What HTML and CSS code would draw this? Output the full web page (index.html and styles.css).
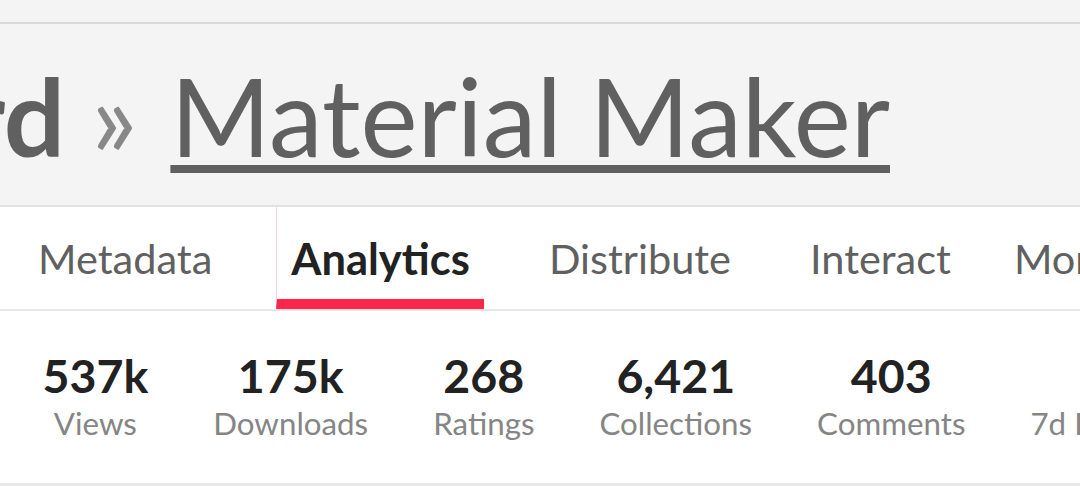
FILE: index.html
```html
<!DOCTYPE html>
<html lang="en">
<head>
<meta charset="utf-8">
<title>Material Maker - Analytics</title>
<link rel="stylesheet" href="styles.css">
</head>
<body>
<div class="top-strip"></div>
<header class="page-header">
  <h1 class="crumbs"><span class="crumb-parent">Dashboard</span><span class="crumb-sep">»</span><a class="crumb-current" href="#">Material Maker</a></h1>
</header>
<nav class="tabs">
  <a class="tab" href="#">Metadata</a>
  <a class="tab active" href="#">Analytics</a>
  <a class="tab" href="#">Distribute</a>
  <a class="tab" href="#">Interact</a>
  <a class="tab tab-more" href="#">More</a>
</nav>
<section class="stats">
  <div class="stat"><div class="stat-value">537k</div><div class="stat-label">Views</div></div>
  <div class="stat"><div class="stat-value">175k</div><div class="stat-label">Downloads</div></div>
  <div class="stat"><div class="stat-value">268</div><div class="stat-label">Ratings</div></div>
  <div class="stat"><div class="stat-value">6,421</div><div class="stat-label">Collections</div></div>
  <div class="stat"><div class="stat-value">403</div><div class="stat-label">Comments</div></div>
  <div class="stat"><div class="stat-value">1</div><div class="stat-label">7d Impressions</div></div>
</section>
</body>
</html>
```
FILE: styles.css
```css
* { box-sizing: border-box; }
html, body {
  margin: 0;
  padding: 0;
  background: #ffffff;
  font-family: Lato, "Noto Sans", sans-serif;
  overflow: hidden;
  width: 1080px;
  height: 489px;
}
.top-strip {
  height: 22px;
  background: #f4f4f4;
  border-bottom: 2px solid #dadada;
  box-sizing: content-box;
}
.page-header {
  background: #f4f4f4;
  height: 183px;
  border-bottom: 2px solid #e2e2e2;
  padding-top: 37px;
  overflow: hidden;
}
.crumbs {
  margin: 0;
  font-size: 108px;
  line-height: 1;
  font-weight: 400;
  color: #606060;
  white-space: nowrap;
  display: flex;
  align-items: baseline;
}
.crumb-parent {
  display: inline-block;
  width: 65px;
  overflow: hidden;
  direction: rtl;
  font-weight: 700;
  color: #606060;
}
.crumb-sep {
  color: #888888;
  margin: 0 33px 0 26px;
}
.crumb-current {
  color: #606060;
  text-decoration: underline;
  text-decoration-thickness: 8px;
  text-underline-offset: 8px;
}
.tabs {
  display: flex;
  height: 104px;
  border-bottom: 2px solid #e6e6e6;
  padding-left: 23px;
  white-space: nowrap;
  overflow: hidden;
}
.tab {
  flex: none;
  display: block;
  font-size: 41.5px;
  line-height: 46px;
  color: #606060;
  text-decoration: none;
  padding: 28px 14px 18px;
  margin-right: 50px;
  height: 102px;
  border-bottom: 10px solid transparent;
  border-left: 1px solid transparent;
}
.tab.active {
  color: #222222;
  font-size: 43.5px;
  font-weight: 700;
  border-bottom-color: #ff2449;
  border-left-color: #f6d3dc;
}
.tab.tab-more {
  padding-left: 0;
  margin-left: -2px;
}
.stats {
  display: flex;
  padding: 41px 0 0 10px;
  height: 175px;
  border-bottom: 3px solid #e8e8e8;
  white-space: nowrap;
  overflow: hidden;
}
.stat {
  flex: none;
  padding: 0 32.5px;
  text-align: center;
}
.stat-value {
  font-size: 46.5px;
  line-height: 1;
  font-weight: 700;
  color: #222222;
}
.stat-label {
  margin-top: 9px;
  font-size: 31.3px;
  line-height: 1;
  color: #858585;
}
```
